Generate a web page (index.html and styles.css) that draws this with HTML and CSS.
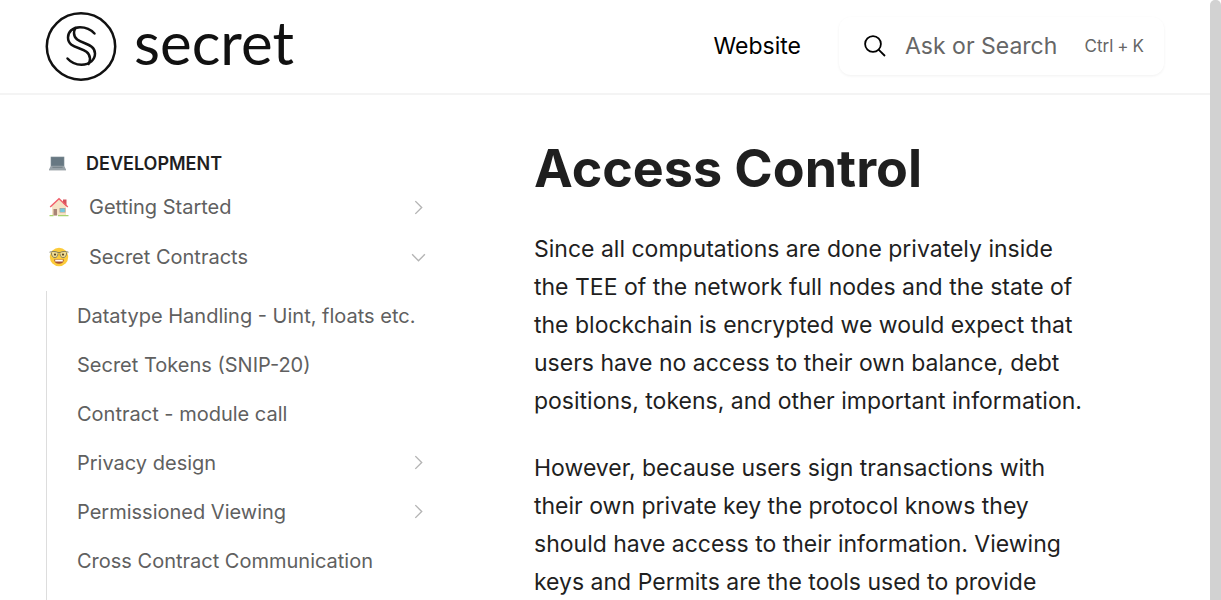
FILE: index.html
```html
<!DOCTYPE html>
<html lang="en">
<head>
<meta charset="utf-8">
<meta name="viewport" content="width=device-width, initial-scale=1">
<title>Access Control | Secret Network</title>
<link rel="stylesheet" href="styles.css">
</head>
<body>
<svg class="defs" aria-hidden="true">
  <symbol id="chevron" viewBox="0 0 16 16"><path d="M5 2l6 6-6 6" fill="none" stroke="currentColor" stroke-width="1.3"/></symbol>
</svg>
<header class="topbar">
  <a class="logo" href="#" aria-label="Secret">
    <svg class="logo-mark" viewBox="0 0 72 70" aria-hidden="true">
      <g fill="none" stroke="#111" stroke-width="2.5" stroke-linecap="round">
        <ellipse cx="36" cy="34.500" rx="34.2" ry="33.2"/>
        <path d="M49.500 21.500C45 16.500 40 15.200 35 15.200C27.500 15.200 23 20 23 25.500C23 39 44.500 33.500 45 46.500C45 48.500 44.500 50.500 43.500 52"/>
        <path d="M22.500 46.500C26 50.500 31 52.700 36.500 52.700C45 52.700 50 47.500 50 41.500C50 29 29 33 29 21C29 19 29.500 17.500 30.500 16"/>
      </g>
    </svg>
    <span class="logo-word">secret</span>
  </a>
  <a class="top-link" href="#">Website</a>
  <button class="search" type="button">
    <svg class="search-icon" viewBox="0 0 24 24" aria-hidden="true"><circle cx="10" cy="10" r="7.900" fill="none" stroke="#000" stroke-width="1.800"/><path d="M15.600 15.600l6.400 6.400" stroke="#000" stroke-width="1.800"/></svg>
    <span class="search-label">Ask or Search</span>
    <kbd class="search-keys"><span>Ctrl</span><span>+</span><span>K</span></kbd>
  </button>
</header>
<div class="layout">
  <nav class="sidebar" aria-label="Development">
    <h2 class="group">
      <svg class="emoji emoji-small" viewBox="0 0 20 20" aria-hidden="true">
        <path d="M2 2h16v11H2z" fill="#75858e"/><path d="M3 3h14v9H3z" fill="#677882"/><path d="M2 13h16l2 4H0z" fill="#98a2a8"/><path d="M4 14.500h12" stroke="#6e7a81" stroke-width="1"/><path d="M0 17h20v1H0z" fill="#737e84"/>
      </svg>
      Development
    </h2>
    <a class="item" href="#">
      <svg class="emoji" viewBox="0 0 20 20" aria-hidden="true">
        <path d="M14 2.500h3.500V9H14z" fill="#d3525b"/><path d="M3 9l7-6.500L17 9v9.500H3z" fill="#f5e3c6"/><path d="M1.200 10L10 1.700 18.800 10" fill="none" stroke="#f0606a" stroke-width="1.500"/><path d="M4.500 12h3.500v6.500H4.500z" fill="#a88476"/><path d="M10.500 11h6v4.500h-6z" fill="#b39a8a"/><path d="M11.200 11.600h4.600v3.300h-4.600z" fill="#73c9dd"/><path d="M.5 18h4v1.200h-4zM9 17.900h10.500v1.300H9z" fill="#a9d36f"/>
      </svg>
      <span class="item-text">Getting Started</span>
      <svg class="chevron" aria-hidden="true"><use href="#chevron"/></svg>
    </a>
    <a class="item" href="#">
      <svg class="emoji" viewBox="0 0 20 20" aria-hidden="true">
        <circle cx="10" cy="10" r="9.200" fill="#fccb3a"/><circle cx="5.800" cy="7.500" r="3.300" fill="#efdc94"/><circle cx="14.200" cy="7.500" r="3.300" fill="#efdc94"/><path d="M.5 5.200C3 4.200 7 4.200 9 5.500h2C13 4.200 17 4.200 19.500 5.200M2.300 5.500C2.300 12.200 9 12.200 9 6.500M11 6.500C11 12.200 17.700 12.200 17.700 5.500" fill="none" stroke="#6b6a55" stroke-width=".8"/><circle cx="6" cy="7.600" r="1.100" fill="#5a4322"/><circle cx="14" cy="7.600" r="1.100" fill="#5a4322"/><path d="M5 12.500h10C14.700 15.300 13 16.700 10 16.700s-4.700-1.400-5-4.200z" fill="#a85332"/><path d="M6.200 12.800h7.600v1.700H6.200z" fill="#fff"/>
      </svg>
      <span class="item-text">Secret Contracts</span>
      <svg class="chevron chevron-open" aria-hidden="true"><use href="#chevron"/></svg>
    </a>
    <div class="children">
      <a class="child" href="#">Datatype Handling - Uint, floats etc.</a>
      <a class="child" href="#">Secret Tokens (SNIP-20)</a>
      <a class="child" href="#">Contract - module call</a>
      <a class="child" href="#"><span class="item-text">Privacy design</span><svg class="chevron" aria-hidden="true"><use href="#chevron"/></svg></a>
      <a class="child" href="#"><span class="item-text">Permissioned Viewing</span><svg class="chevron" aria-hidden="true"><use href="#chevron"/></svg></a>
      <a class="child" href="#">Cross Contract Communication</a>
    </div>
  </nav>
  <main class="content">
    <h1 class="title">Access Control</h1>
    <p class="para">Since all computations are done privately inside the TEE of the network full nodes and the state of the blockchain is encrypted we would expect that users have no access to their own balance, debt positions, tokens, and other important information.</p>
    <p class="para">However, because users sign transactions with their own private key the protocol knows they should have access to their information. Viewing keys and Permits are the tools used to provide</p>
  </main>
</div>
<div class="scrollbar" aria-hidden="true"></div>
</body>
</html>
```
FILE: styles.css
```css
* { box-sizing: border-box; }
body {
  display: flex;
  flex-direction: column;
  min-height: 100vh;
  margin: 0;
  padding-right: 11px;
  background: #fff;
  color: #1f1f1f;
  font-family: Inter, "Liberation Sans", sans-serif;
}
a { color: inherit; text-decoration: none; }
.defs { display: none; }

.topbar {
  display: flex;
  align-items: center;
  padding: 10px 46px 11px 45px;
  border-bottom: 2px solid #f4f4f4;
}
.logo { display: flex; align-items: center; gap: 17px; margin-right: auto; padding-top: 2px; }
.logo-mark { width: 72px; height: 70px; }
.logo-word {
  padding-bottom: 10px;
  color: #111;
  font-family: Lato, sans-serif;
  font-size: 60px;
  line-height: 60px;
}
.top-link { font-size: 23px; color: #000; }
.search {
  display: flex;
  align-items: center;
  margin-left: 38px;
  height: 58px;
  width: 325px;
  padding: 0 20px 0 24px;
  border: 0;
  border-radius: 12px;
  background: #fff;
  box-shadow: 0 1px 3px rgba(0, 0, 0, 0.06);
  color: #666;
  font-family: inherit;
  font-size: 23px;
}
.search-icon { width: 24px; height: 24px; margin-right: 18px; }
.search-keys { display: flex; gap: 4px; margin-left: auto; font-family: inherit; font-size: 17px; }

.layout {
  display: grid;
  flex: 1;
  grid-template-columns: 390px minmax(0, 1fr);
  gap: 98px;
  padding: 0 121px 0 46px;
}
.sidebar { display: flex; flex-direction: column; padding-top: 54px; color: #606060; font-size: 20px; }
.group {
  display: flex;
  align-items: center;
  gap: 20px;
  margin: 0 0 5px;
  padding-left: 3px;
  height: 28px;
  font-size: 18px;
  font-weight: 600;
  text-transform: uppercase;
  color: #1f1f1f;
}
.emoji { width: 20px; height: 20px; flex: none; }
.emoji-small { width: 17px; height: 17px; }
.item { display: flex; align-items: center; gap: 20px; height: 50px; padding: 0 9px 0 3px; }
.item-text { flex: 1; }
.chevron { width: 17px; height: 17px; color: #b4b4b4; }
.chevron-open { transform: rotate(90deg); }
.children { flex: 1; margin-top: 9px; border-left: 1px solid #ddd; }
.child { display: flex; align-items: center; height: 49px; padding: 0 9px 0 30px; }

.content { padding-top: 42px; }
.title { margin: 0; font-size: 52px; line-height: 64px; font-weight: 700; }
.para { margin: 29px 0 0; font-size: 23px; line-height: 38px; }

.scrollbar { position: fixed; top: 0; right: 0; bottom: 0; width: 11px; border-radius: 5px 5px 0 0; background: #d2d2d2; }
```
